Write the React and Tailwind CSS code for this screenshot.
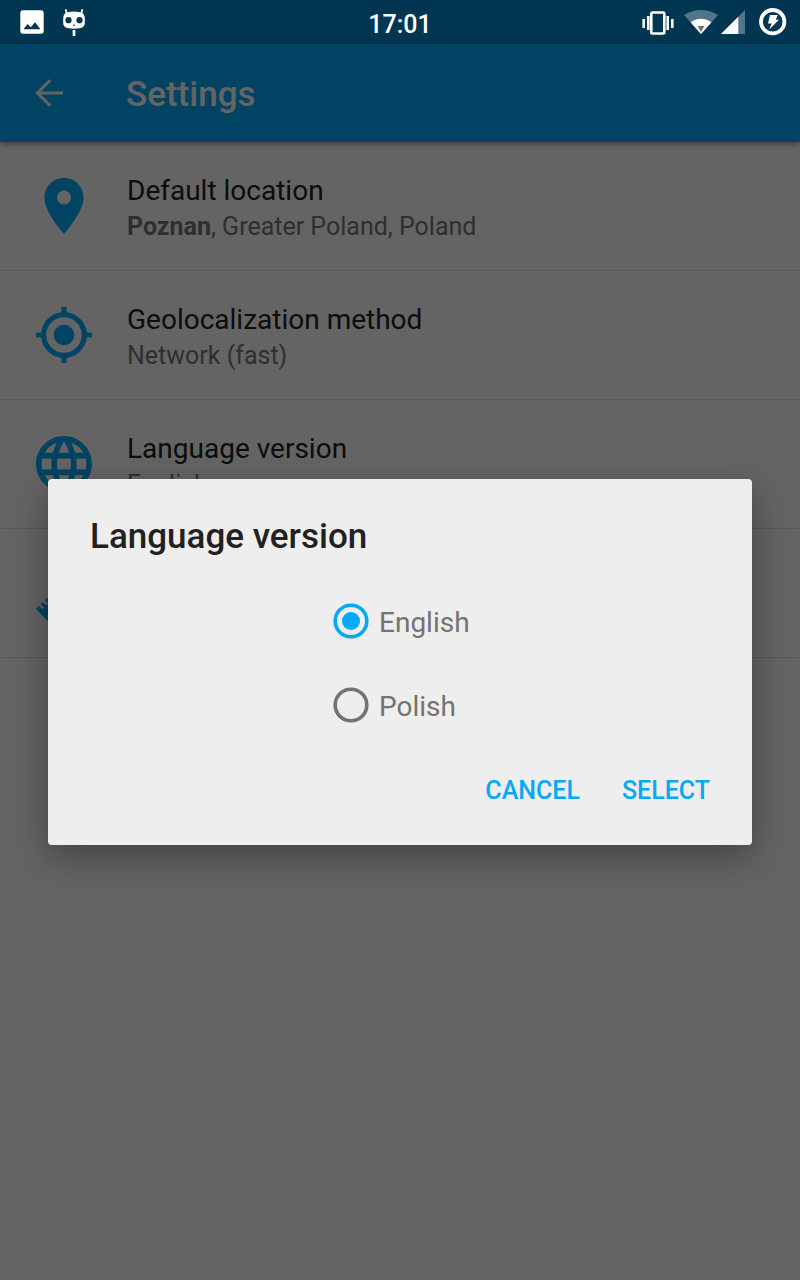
const PinIcon = () => (
  <svg className="h-14 w-10" viewBox="5 2 14 20" fill="currentColor">
    <path d="M12 2C8.13 2 5 5.13 5 9c0 5.25 7 13 7 13s7-7.75 7-13c0-3.87-3.13-7-7-7zm0 9.5a2.5 2.5 0 0 1 0-5 2.5 2.5 0 0 1 0 5z" />
  </svg>
);

const TargetIcon = () => (
  <svg className="size-14" viewBox="1 1 22 22" fill="currentColor">
    <path d="M12 8c-2.21 0-4 1.79-4 4s1.79 4 4 4 4-1.79 4-4-1.79-4-4-4zm8.94 3A8.994 8.994 0 0 0 13 3.06V1h-2v2.06A8.994 8.994 0 0 0 3.06 11H1v2h2.06A8.994 8.994 0 0 0 11 20.94V23h2v-2.06A8.994 8.994 0 0 0 20.94 13H23v-2h-2.06zM12 19c-3.87 0-7-3.13-7-7s3.13-7 7-7 7 3.13 7 7-3.13 7-7 7z" />
  </svg>
);

const GlobeIcon = () => (
  <svg className="size-14" viewBox="2 2 20 20" fill="currentColor">
    <path d="M11.99 2C6.47 2 2 6.48 2 12s4.47 10 9.99 10C17.52 22 22 17.52 22 12S17.52 2 11.99 2zm6.93 6h-2.95a15.65 15.65 0 0 0-1.38-3.56A8.03 8.03 0 0 1 18.92 8zM12 4.04c.83 1.2 1.48 2.53 1.91 3.96h-3.82c.43-1.43 1.08-2.76 1.91-3.96zM4.26 14C4.1 13.36 4 12.69 4 12s.1-1.36.26-2h3.38c-.08.66-.14 1.32-.14 2 0 .68.06 1.34.14 2H4.26zm.82 2h2.95c.32 1.25.78 2.45 1.38 3.56A7.987 7.987 0 0 1 5.08 16zm2.95-8H5.08a7.987 7.987 0 0 1 4.33-3.56A15.65 15.65 0 0 0 8.03 8zM12 19.96c-.83-1.2-1.48-2.53-1.91-3.96h3.82c-.43 1.43-1.08 2.76-1.91 3.96zM14.34 14H9.66c-.09-.66-.16-1.32-.16-2 0-.68.07-1.35.16-2h4.68c.09.65.16 1.32.16 2 0 .68-.07 1.34-.16 2zm.25 5.56c.6-1.11 1.06-2.31 1.38-3.56h2.95a8.03 8.03 0 0 1-4.33 3.56zM16.36 14c.08-.66.14-1.32.14-2 0-.68-.06-1.34-.14-2h3.38c.16.64.26 1.31.26 2s-.1 1.36-.26 2h-3.38z" />
  </svg>
);

const RulerIcon = () => (
  <svg className="size-14" viewBox="0 0 56 56" fill="currentColor">
    <path d="M0 44L3 41L6.3 44.3L8 42.6L4.7 39.3L7 37L10.3 40.3L12 38.6L8.7 35.3L11.5 32.5L17 38L19 36L13.5 30.5L40 4L52 16L12 56Z" />
  </svg>
);

function StatusBar() {
  return (
    <header className="grid h-11 grid-cols-3 items-center bg-[#003652] text-white">
      <div className="flex items-center gap-[19px] pl-5">
        <svg className="size-6" viewBox="0 0 24 24">
          <path fill="currentColor" fillRule="evenodd" d="M3 .3H21Q23.7.3 23.7 3V21Q23.7 23.7 21 23.7H3Q.3 23.7.3 21V3Q.3.3 3 .3ZM3.5 19.3H20.5L15 12.3 10.8 17.2 7.6 14Z" />
        </svg>
        <svg className="h-7 w-[22px]" viewBox="0 0 22 28">
          <path d="M3.8 6L2.6 1.2M18.2 6L19.4 1.2" fill="none" stroke="currentColor" strokeWidth="1.8" />
          <path fill="currentColor" d="M4 4.4Q11 2.7 18 4.4Q22 5.6 21.8 11V15.5Q21.5 18.8 18 19.9Q11 21.4 4 19.9Q.5 18.8 .2 15.5V11Q0 5.6 4 4.4Z" />
          <circle cx="5.5" cy="12.2" r="3.1" fill="#003652" />
          <circle cx="16.5" cy="12.2" r="3.1" fill="#003652" />
          <path d="M10 17.2h2" stroke="#003652" strokeWidth="1" />
          <path d="M11 22v6" stroke="currentColor" strokeWidth="2.7" />
        </svg>
      </div>
      <div className="pt-1 text-center text-[25px] leading-none font-medium">17:01</div>
      <div className="flex items-center justify-end pr-[13px]">
        <svg className="mt-px mr-2.5 h-6 w-8" viewBox="0 0 32 24">
          <rect x="9.3" y="1.5" width="13" height="21" rx="1.2" fill="none" stroke="currentColor" strokeWidth="2.6" />
          <path d="M6.3 5V19M25.7 5V19M1.7 8V17M30.3 8V17" stroke="currentColor" strokeWidth="2.6" />
        </svg>
        <svg className="mr-[3px] h-6 w-[34px]" viewBox="0 0 34 24">
          <path fill="#fff" fillOpacity=".32" d="M0 5Q17-5 34 5L17 24Z" />
          <path fill="#fff" d="M6.5 12.2Q17 5.5 27.5 12.2L17 24Z" />
          <path fill="#75706b" d="M13.6 16H20.4L17 22.2Z" />
        </svg>
        <svg className="mr-3.5 size-6" viewBox="0 0 24 24">
          <path fill="#fff" fillOpacity=".32" d="M24 0V24H0Z" />
          <path fill="#fff" d="M17.3 6.7V24H0Z" />
        </svg>
        <svg className="size-7" viewBox="0 0 28 28">
          <circle cx="13.7" cy="13.7" r="11.7" fill="none" stroke="currentColor" strokeWidth="3.8" />
          <path fill="currentColor" d="M11 7H18.8L16.7 11.8H20L10.2 21.5L12.6 15.4H9Z" />
        </svg>
      </div>
    </header>
  );
}

function SettingRow({ icon, title, children }) {
  return (
    <li className="flex h-[129px] items-center border-b border-[#dedede]">
      <div className="flex w-32 shrink-0 justify-center text-[#03a9f4]">{icon}</div>
      <div className="-ml-px pt-1.5">
        <h2 className="text-[28px] leading-9 text-[#212121]">{title}</h2>
        <p className="text-[25px] leading-9 text-[#757575]">{children}</p>
      </div>
    </li>
  );
}

function RadioOption({ label, checked }) {
  return (
    <label className="flex h-[84px] items-center gap-[10px] text-[28px] text-[#737373]">
      <svg className={checked ? "size-9 text-[#03a9f4]" : "size-9 text-[#737373]"} viewBox="0 0 36 36">
        <circle cx="18" cy="18" r="15.8" fill="none" stroke="currentColor" strokeWidth="3.6" />
        {checked && <circle cx="18" cy="18" r="9" fill="currentColor" />}
      </svg>
      <span className="pt-1">{label}</span>
    </label>
  );
}

function LanguageDialog() {
  return (
    <section role="dialog" className="absolute top-[479px] left-12 flex h-[366px] w-[704px] flex-col rounded-[4px] bg-[#eeeeee] px-[42px] shadow-[0_12px_36px_rgba(0,0,0,0.34)]">
      <h2 className="pt-[37px] text-[35px] leading-[42px] font-medium text-[#212121]">Language version</h2>
      <div className="mt-[21px] ml-[243px] flex flex-col">
        <RadioOption label="English" checked />
        <RadioOption label="Polish" />
      </div>
      <div className="flex justify-end gap-[42px] pt-[26px] text-[25px] leading-9 font-medium text-[#03a9f4]">
        <button>CANCEL</button>
        <button>SELECT</button>
      </div>
    </section>
  );
}

export default function App() {
  return (
    <div className="relative flex h-[1280px] w-[800px] flex-col overflow-hidden bg-[#fafafa] font-['Roboto',sans-serif]">
      <StatusBar />
      <main className="relative grow">
        <div className="relative flex h-[98px] items-center bg-[#03a9f4] pl-[35px] text-[#fafafa] shadow-[0_2px_6px_rgba(0,0,0,0.4)]">
          <svg className="h-7 w-7" viewBox="0 0 28 28" fill="none" stroke="currentColor" strokeWidth="3">
            <path d="M28 14H3M15.2 1.2L2.4 14L15.2 26.8" />
          </svg>
          <h1 className="pt-1 pl-[63px] text-[35px] font-medium">Settings</h1>
        </div>
        <ul>
          <SettingRow icon={<PinIcon />} title="Default location"><b>Poznan</b>, Greater Poland, Poland</SettingRow>
          <SettingRow icon={<TargetIcon />} title="Geolocalization method">Network (fast)</SettingRow>
          <SettingRow icon={<GlobeIcon />} title="Language version">English</SettingRow>
          <SettingRow icon={<RulerIcon />} />
        </ul>
        <div className="absolute inset-0 bg-black/60" />
      </main>
      <LanguageDialog />
    </div>
  );
}
